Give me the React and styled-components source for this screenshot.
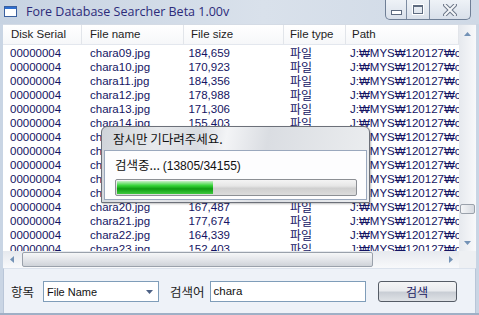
import styled, { createGlobalStyle } from 'styled-components';

const GlobalStyle = createGlobalStyle`
    html, body {
        margin: 0;
        padding: 0;
        width: 479px;
        height: 315px;
        overflow: hidden;
        background: #fff;
    }
`;

const rows = [
    ['09', '184,659'], ['10', '170,923'], ['11', '184,356'], ['12', '178,988'],
    ['13', '171,306'], ['14', '155,403'], ['15', '162,118'], ['16', '173,540'],
    ['17', '158,902'], ['18', '181,227'], ['19', '169,334'], ['20', '167,487'],
    ['21', '177,674'], ['22', '164,339'], ['23', '152,403'],
];

const columns = [
    { label: 'Disk Serial', width: 79, pad: 8 },
    { label: 'File name', width: 102, pad: 8 },
    { label: 'File size', width: 100, pad: 7 },
    { label: 'File type', width: 62, pad: 6 },
    { label: 'Path', width: 113, pad: 6 },
];

const arrowPaths = {
    up: 'M0 4 L3.5 0 L7 4 Z',
    down: 'M0 0 L7 0 L3.5 4 Z',
    left: 'M4 0 L4 7 L0 3.5 Z',
    right: 'M0 0 L4 3.5 L0 7 Z',
};

function ScrollArrow({ dir }) {
    const flat = dir === 'up' || dir === 'down';
    return (
        <Arrow>
            <svg width={flat ? 7 : 4} height={flat ? 4 : 7} viewBox={flat ? '0 0 7 4' : '0 0 4 7'}>
                <path d={arrowPaths[dir]} fill="#7392b6" />
            </svg>
        </Arrow>
    );
}

function App() {
    return (
        <>
            <GlobalStyle />
            <Window>
                <TitleBar>
                    <AppIcon>
                        <span />
                    </AppIcon>
                    <Title>Fore Database Searcher Beta 1.00v</Title>
                    <Controls>
                        <CtrlButton w={21}><MinGlyph /></CtrlButton>
                        <CtrlButton w={23}><MaxGlyph /></CtrlButton>
                        <CtrlButton w={40} last>
                            <svg width="14" height="12" viewBox="0 0 14 12">
                                <path d="M2 1 L12 11 M12 1 L2 11" stroke="#6d7789" strokeWidth="4" strokeLinecap="round" />
                                <path d="M2 1 L12 11 M12 1 L2 11" stroke="#f4f6f9" strokeWidth="2" strokeLinecap="round" />
                            </svg>
                        </CtrlButton>
                    </Controls>
                </TitleBar>

                <Content>
                    <ListView>
                        <ListMain>
                            <Table>
                                <HeaderRow>
                                    {columns.map((c) => (
                                        <HeaderCell key={c.label} w={c.width} pad={c.pad}>{c.label}</HeaderCell>
                                    ))}
                                </HeaderRow>
                                <Body>
                                    {rows.map(([n, size]) => (
                                        <Row key={n}>
                                            <Cell w={79} pad={7}>00000004</Cell>
                                            <Cell w={102} pad={8}>chara{n}.jpg</Cell>
                                            <Cell w={100} pad={0} right>{size}</Cell>
                                            <Cell w={62} pad={6} kr>파일</Cell>
                                            <Cell w={113} pad={4}>J:₩MYS₩120127₩chara{n}.jpg</Cell>
                                        </Row>
                                    ))}
                                </Body>
                            </Table>
                            <VScroll>
                                <ScrollArrow dir="up" />
                                <VTrack>
                                    <VThumb />
                                </VTrack>
                                <ScrollArrow dir="down" />
                            </VScroll>
                        </ListMain>
                        <HScroll>
                            <ScrollArrow dir="left" />
                            <HTrack>
                                <HThumb />
                            </HTrack>
                            <ScrollArrow dir="right" />
                            <Corner />
                        </HScroll>
                    </ListView>

                    <BottomBar>
                        <Label>항목</Label>
                        <Select>
                            <span>File Name</span>
                            <svg width="7" height="4" viewBox="0 0 7 4">
                                <path d="M0 0 L7 0 L3.5 4 Z" fill="#4d6185" />
                            </svg>
                        </Select>
                        <Label>검색어</Label>
                        <Input>chara</Input>
                        <SearchButton>검색</SearchButton>
                    </BottomBar>
                </Content>

                <Dialog>
                    <DialogTitle>잠시만 기다려주세요.</DialogTitle>
                    <DialogBody>
                        <Status>검색중... <Count>(13805/34155)</Count></Status>
                        <Progress>
                            <ProgressFill style={{ width: `${(13805 / 34155) * 100}%` }} />
                        </Progress>
                    </DialogBody>
                </Dialog>
            </Window>
        </>
    );
}

const Window = styled.div`
    position: relative;
    width: 479px;
    height: 315px;
    display: flex;
    flex-direction: column;
    background: #c9d5e4;
    box-sizing: border-box;
    border-bottom: 2px solid #9fb0c6;
`;

const TitleBar = styled.div`
    height: 24px;
    display: flex;
    align-items: flex-start;
    background: linear-gradient(to right, #c7d3e2 0%, #d9e1eb 55%, #cfd9e6 100%);
    flex-shrink: 0;
`;

const AppIcon = styled.div`
    width: 13px;
    height: 11px;
    margin: 6px 0 0 4px;
    border: 1px solid #3a5f9e;
    background: #fff;
    box-sizing: border-box;

    > span {
        display: block;
        height: 2px;
        background: #2f6fd0;
    }
`;

const Title = styled.div`
    margin: 4px 0 0 9px;
    font-family: "Open Sans", "Noto Sans", sans-serif;
    font-size: 12.5px;
    line-height: 16px;
    color: #2c2b7a;
    flex: 1;
`;

const Controls = styled.div`
    display: flex;
    margin-right: 8px;
    height: 19px;
    border: 1px solid #6f7f96;
    border-top: none;
    border-radius: 0 0 5px 5px;
    overflow: hidden;
    background: linear-gradient(#eef2f7, #d9e0ea);
`;

const CtrlButton = styled.div`
    width: ${({ w }) => w}px;
    height: 100%;
    display: flex;
    align-items: center;
    justify-content: center;
    border-right: ${({ last }) => (last ? 'none' : '1px solid #7d8ca2')};
    box-sizing: border-box;
`;

const MinGlyph = styled.div`
    width: 9px;
    height: 3px;
    margin-top: 6px;
    border: 1px solid #5e6b80;
    background: #fff;
`;

const MaxGlyph = styled.div`
    width: 8px;
    height: 6px;
    border: 1px solid #5e6b80;
    border-top-width: 2px;
    outline: 1px solid #fff;
`;

const Content = styled.div`
    flex: 1;
    display: flex;
    flex-direction: column;
    margin: 0 3px;
    min-height: 0;
`;

const ListView = styled.div`
    height: 244px;
    display: flex;
    flex-direction: column;
    background: #fff;
    border-top: 1px solid #d4dbe5;
    box-sizing: border-box;
`;

const ListMain = styled.div`
    flex: 1;
    display: flex;
    min-height: 0;
`;

const Table = styled.div`
    flex: 1;
    overflow: hidden;
    display: flex;
    flex-direction: column;
`;

const HeaderRow = styled.div`
    height: 19px;
    display: flex;
    border-bottom: 1px solid #e3e7ee;
    background: linear-gradient(#ffffff, #f6f7f9);
    flex-shrink: 0;
`;

const HeaderCell = styled.div`
    width: ${({ w }) => w}px;
    flex-shrink: 0;
    box-sizing: border-box;
    padding-left: ${({ pad }) => pad}px;
    border-right: 1px solid #e2e5ea;
    font-family: "Liberation Sans", Arial, sans-serif;
    font-size: 11.5px;
    line-height: 19px;
    color: #1e1e1e;
`;

const Body = styled.div`
    flex: 1;
    overflow: hidden;
    padding-top: 1px;
`;

const Row = styled.div`
    display: flex;
    height: 14px;
`;

const Cell = styled.div`
    width: ${({ w }) => w}px;
    flex-shrink: 0;
    box-sizing: border-box;
    padding-left: ${({ pad }) => pad}px;
    padding-right: ${({ right }) => (right ? '54px' : '0')};
    text-align: ${({ right }) => (right ? 'right' : 'left')};
    white-space: nowrap;
    overflow: hidden;
    font-family: ${({ kr }) => (kr ? '"Noto Sans CJK KR", sans-serif' : '"Liberation Sans", Arial, "Noto Sans CJK KR", sans-serif')};
    font-size: ${({ kr }) => (kr ? '12px' : '11.5px')};
    line-height: 14px;
    color: #141463;
`;

const VScroll = styled.div`
    width: 17px;
    display: flex;
    flex-direction: column;
    background: linear-gradient(to right, #e6e9ee, #f8f9fb);
    flex-shrink: 0;
`;

const Arrow = styled.div`
    width: 17px;
    height: 17px;
    flex-shrink: 0;
    display: flex;
    align-items: center;
    justify-content: center;
`;

const VTrack = styled.div`
    flex: 1;
    display: flex;
    flex-direction: column;
    justify-content: flex-end;
    padding-bottom: 20px;
`;

const VThumb = styled.div`
    height: 8px;
    margin: 0 1px;
    border: 1px solid #9aa1ab;
    border-radius: 2px;
    background: linear-gradient(to right, #f4f5f7, #d7dbe1);
`;

const HScroll = styled.div`
    height: 17px;
    display: flex;
    align-items: center;
    background: linear-gradient(#e6e9ee, #f8f9fb);
    flex-shrink: 0;
`;

const HTrack = styled.div`
    flex: 1;
    height: 100%;
    display: flex;
    align-items: stretch;
`;

const HThumb = styled.div`
    width: 349px;
    margin: 1px 0 1px 2px;
    border: 1px solid #9aa1ab;
    border-radius: 2px;
    background: linear-gradient(#f6f7f8, #e4e6ea 50%, #cfd3d9);
`;

const Corner = styled.div`
    width: 17px;
    height: 17px;
    background: #eef0f3;
`;

const BottomBar = styled.div`
    flex: 1;
    display: flex;
    align-items: center;
    padding: 1px 0 0 7px;
    background: #eef2f8;
    border-top: 1px solid #dbe2ec;
    border-left: 1px solid #b9c6d8;
    border-right: 1px solid #b9c6d8;
`;

const Label = styled.div`
    font-family: "Noto Sans CJK KR", sans-serif;
    font-size: 12.5px;
    color: #1a1a1a;
    margin-right: ${({ children }) => (children === '항목' ? 9 : 5)}px;
`;

const Select = styled.div`
    width: 116px;
    height: 21px;
    box-sizing: border-box;
    border: 1px solid #7f9db9;
    background: #fff;
    display: flex;
    align-items: center;
    justify-content: space-between;
    padding: 0 5px 0 3px;
    margin-right: 11px;
    font-family: "Liberation Sans", Arial, sans-serif;
    font-size: 11px;
    color: #111;
`;

const Input = styled.div`
    width: 156px;
    height: 21px;
    box-sizing: border-box;
    border: 1px solid #7f9db9;
    background: #fff;
    padding: 0 3px;
    font-family: "Liberation Sans", Arial, sans-serif;
    font-size: 11.5px;
    line-height: 19px;
    color: #111;
    margin-right: 12px;
`;

const SearchButton = styled.div`
    width: 79px;
    height: 21px;
    box-sizing: border-box;
    border: 1px solid #555c66;
    border-radius: 3px;
    background: linear-gradient(#f4f5f6 0%, #e9ebee 45%, #c9ced5 55%, #dfe2e6 100%);
    display: flex;
    align-items: center;
    justify-content: center;
    font-family: "Noto Sans CJK KR", sans-serif;
    font-size: 12px;
    color: #1a1a62;
`;

const Dialog = styled.div`
    position: absolute;
    left: 101px;
    top: 126px;
    width: 269px;
    height: 77px;
    box-sizing: border-box;
    border: 1px solid #6c7079;
    border-radius: 6px 6px 0 0;
    background: linear-gradient(100deg, #cfd3d9 0%, #e7e9ec 20%, #d9dce1 35%, #f3f4f6 45%, #dadde2 60%, #eceef0 100%);
    display: flex;
    flex-direction: column;
    padding: 0 2px 2px 2px;
    box-shadow: 1px 1px 2px rgba(0, 0, 0, 0.25);
`;

const DialogTitle = styled.div`
    height: 23px;
    padding-left: 9px;
    font-family: "Noto Sans CJK KR", sans-serif;
    font-size: 12.5px;
    line-height: 23px;
    color: #111;
`;

const DialogBody = styled.div`
    flex: 1;
    border: 1px solid #9aa8bd;
    background: #fdfdfe;
    padding: 6px 10px 0 10px;
`;

const Status = styled.div`
    font-family: "Noto Sans CJK KR", sans-serif;
    font-size: 12.5px;
    line-height: 16px;
    color: #111;
    margin-bottom: 5px;
`;

const Count = styled.span`
    font-family: "Liberation Sans", Arial, sans-serif;
    font-size: 12px;
`;

const Progress = styled.div`
    width: 242px;
    height: 17px;
    box-sizing: border-box;
    border: 1px solid #8c8f94;
    border-radius: 2px;
    background: linear-gradient(#f4f4f4 0%, #e6e6e6 40%, #cfcfcf 55%, #dcdcdc 100%);
    padding: 1px;
`;

const ProgressFill = styled.div`
    height: 100%;
    background: linear-gradient(#c6f0c6 0%, #37d43a 35%, #0e9c12 60%, #3ec93f 100%);
`;

export default App;
